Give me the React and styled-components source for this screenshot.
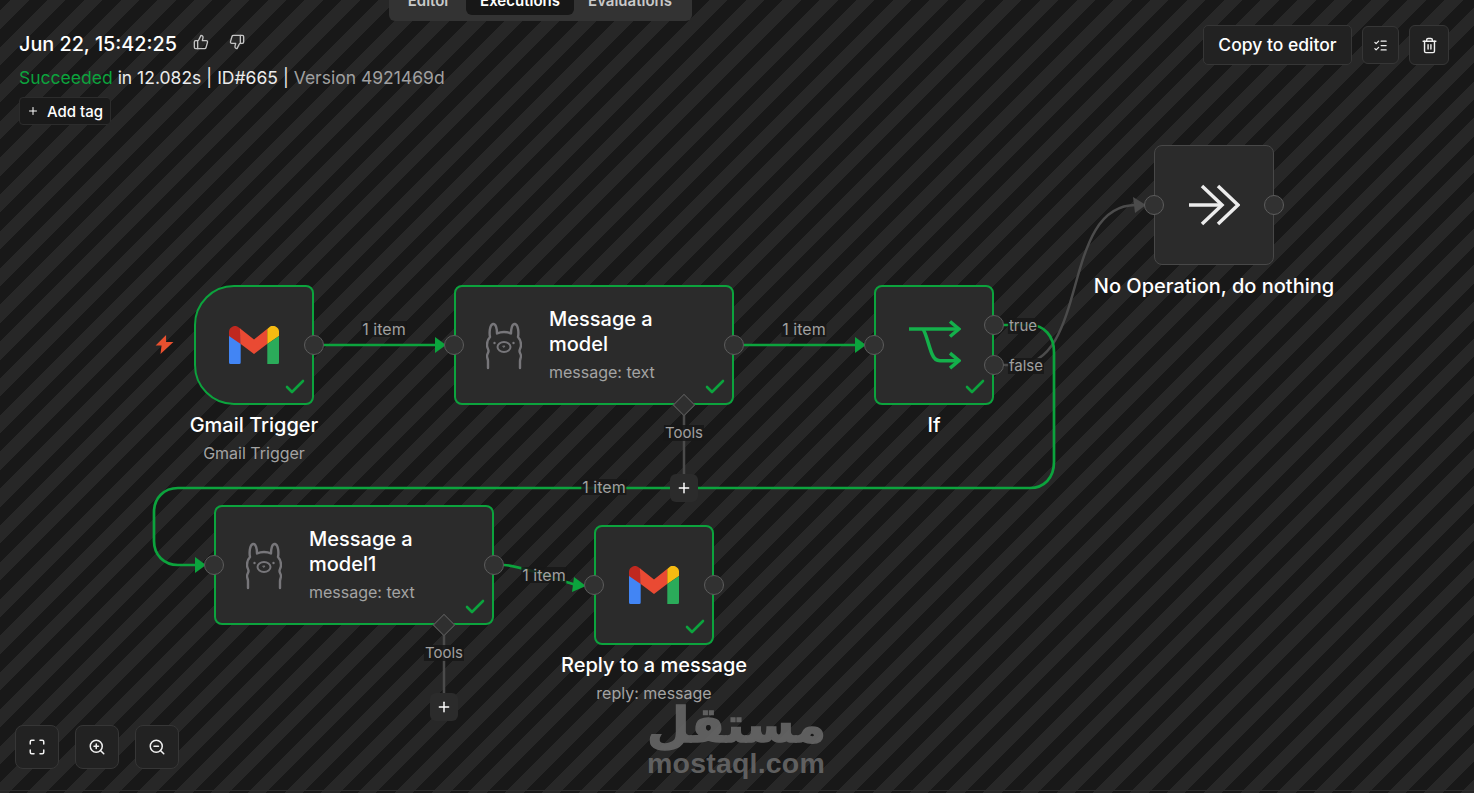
import React from "react";
import styled, { createGlobalStyle } from "styled-components";
import { Check, ListChecks, Maximize, Plus, ThumbsDown, ThumbsUp, Trash2, ZoomIn, ZoomOut } from "lucide-react";

const GREEN = "#0ca33d";
const EDGE_GREY = "#4b4b4b";

const GlobalStyle = createGlobalStyle`
  html, body {
    margin: 0;
    background: #181818;
    font-family: Inter, "Liberation Sans", sans-serif;
    overflow: hidden;
  }
`;

const Page = styled.div`
  position: relative;
  width: 100%;
  height: 100vh;
  overflow: hidden;
  display: flex;
  flex-direction: column;
  justify-content: space-between;
  box-sizing: border-box;
  background: repeating-linear-gradient(
    135deg,
    #181818 0 7.6px,
    #272727 7.6px 20.6px,
    #181818 20.6px 26px
  );
  &::after {
    content: "";
    position: absolute;
    left: 0;
    right: 0;
    bottom: 2px;
    height: 1px;
    background: #2e2e2e;
  }
`;

const Canvas = styled.div`
  position: absolute;
  inset: 0;
`;

const EdgeLayer = styled.svg`
  position: absolute;
  inset: 0;
`;

const Tabs = styled.div`
  position: absolute;
  top: -14px;
  left: 389px;
  width: 303px;
  height: 35px;
  box-sizing: border-box;
  padding-left: 3px;
  display: flex;
  background: #333;
  border-radius: 6px;
`;

const Tab = styled.div`
  width: ${(p) => p.$w}px;
  height: 29px;
  flex: none;
  display: flex;
  align-items: center;
  justify-content: center;
  font-size: 15px;
  font-weight: 600;
  color: ${(p) => (p.$active ? "#fff" : "#c9c9c9")};
  background: ${(p) => (p.$active ? "#171717" : "transparent")};
  border-radius: 6px;
`;

const Header = styled.header`
  position: relative;
  display: flex;
  justify-content: space-between;
  align-items: flex-start;
  padding: 25px 25px 0 19px;
`;

const Info = styled.div`
  display: flex;
  flex-direction: column;
`;

const TitleRow = styled.div`
  display: flex;
  align-items: center;
  height: 36px;
`;

const Title = styled.span`
  font-size: 19.800px;
  font-weight: 500;
  color: #fff;
  margin-right: 16px;
  margin-top: 2px;
`;

const Thumb = styled.span`
  display: flex;
  color: #c4c4c4;
  margin-right: 20px;
  margin-top: -3px;
`;

const Status = styled.div`
  margin-top: 2px;
  height: 28px;
  display: flex;
  align-items: center;
  gap: 5px;
  font-size: 17.500px;
  color: #ececec;
  white-space: pre;
`;

const Success = styled.span`
  color: ${GREEN};
`;

const Muted = styled.span`
  color: #a0a0a0;
`;

const AddTag = styled.button`
  margin-top: 6px;
  width: 92px;
  height: 28px;
  padding: 0;
  display: flex;
  align-items: center;
  justify-content: center;
  gap: 8px;
  font: 500 15px Inter, sans-serif;
  color: #fff;
  background: #1a1a1a;
  border: 1px solid #2c2c2c;
  border-radius: 4px;
`;

const Actions = styled.div`
  display: flex;
  align-items: center;
  gap: 10px;
`;

const CopyButton = styled.button`
  width: 149px;
  height: 40px;
  padding: 0 0 2px;
  font: 500 17.500px Inter, sans-serif;
  color: #fff;
  background: #222;
  border: 1px solid #363636;
  border-radius: 5px;
`;

const SquareButton = styled.button`
  width: ${(p) => p.$w}px;
  height: ${(p) => p.$h}px;
  padding: 0;
  display: flex;
  align-items: center;
  justify-content: center;
  color: #f0f0f0;
  background: #222;
  border: 1px solid #363636;
  border-radius: ${(p) => p.$r || 6}px;
`;

const Footer = styled.footer`
  position: relative;
  display: flex;
  gap: 16px;
  padding: 0 0 24px 15px;
`;

const Node = styled.div`
  position: absolute;
  left: ${(p) => p.$x}px;
  top: ${(p) => p.$y}px;
  width: ${(p) => p.$w}px;
  height: 120px;
  box-sizing: border-box;
  display: flex;
  align-items: center;
  justify-content: ${(p) => (p.$wide ? "flex-start" : "center")};
  padding-left: ${(p) => (p.$wide ? 30 : 0)}px;
  background: #2b2b2b;
  border: ${(p) => (p.$idle ? "1px solid #484848" : `2px solid ${GREEN}`)};
  border-radius: ${(p) => (p.$trigger ? "40px 8px 8px 40px" : "8px")};
`;

const NodeText = styled.div`
  margin: -2px 0 0 27px;
  width: 150px;
`;

const NodeName = styled.div`
  font-size: 20px;
  font-weight: 500;
  line-height: 25px;
  color: #fff;
`;

const NodeSub = styled.div`
  margin-top: 5px;
  font-size: 16px;
  line-height: 20px;
  color: #a3a3a3;
`;

const Caption = styled.div`
  position: absolute;
  top: 100%;
  left: 50%;
  transform: translateX(-50%);
  margin-top: 10px;
  width: max-content;
  text-align: center;
`;

const CaptionSub = styled.div`
  margin-top: 5px;
  font-size: 16px;
  line-height: 20px;
  color: #a3a3a3;
`;

const Handle = styled.span`
  position: absolute;
  top: ${(p) => p.$top}px;
  ${(p) => p.$side}: ${(p) => (p.$thin ? -11 : -12)}px;
  width: 20px;
  height: 20px;
  box-sizing: border-box;
  background: #313131;
  border: 1px solid #5c5c5c;
  border-radius: 50%;
`;

const DoneMark = styled.span`
  position: absolute;
  right: 5px;
  bottom: 4px;
  display: flex;
  color: ${GREEN};
`;

const EdgeLabel = styled.span`
  position: absolute;
  left: ${(p) => p.$x}px;
  top: ${(p) => p.$y}px;
  transform: translate(-50%, -50%);
  padding: 0 1px;
  font-size: ${(p) => p.$size || 16}px;
  line-height: 16px;
  color: #a0a0a0;
  background: rgba(23, 23, 23, 0.85);
`;

const Diamond = styled.span`
  position: absolute;
  left: ${(p) => p.$x - 8}px;
  top: ${(p) => p.$y - 8}px;
  width: 16px;
  height: 16px;
  box-sizing: border-box;
  background: #2f2f2f;
  border: 1px solid #5a5a5a;
  transform: rotate(45deg);
`;

const AddNode = styled.span`
  position: absolute;
  left: ${(p) => p.$x - 14}px;
  top: ${(p) => p.$y - 14}px;
  width: 28px;
  height: 28px;
  display: flex;
  align-items: center;
  justify-content: center;
  color: #fff;
  background: #2b2b2b;
  border-radius: 6px;
`;

const Bolt = styled.svg`
  position: absolute;
  left: 154px;
  top: 334px;
`;

const Watermark = styled.div`
  position: absolute;
  left: 647px;
  top: 698px;
  width: 178px;
  text-align: center;
  color: #656565;
  opacity: 0.92;
`;

const WatermarkArabic = styled.div`
  font-family: "DejaVu Sans", sans-serif;
  font-weight: 700;
  font-size: 49px;
  line-height: 55px;
  -webkit-text-stroke: 1.500px #656565;
`;

const WatermarkLatin = styled.div`
  font-family: "Liberation Sans", sans-serif;
  font-weight: 700;
  font-size: 28.500px;
  line-height: 20px;
  letter-spacing: 0.2px;
`;

const LlamaSvg = styled.svg`
  flex: none;
  margin-top: 2px;
`;

const GmailLogo = () => (
  <svg width="50" height="38" viewBox="0 0 50 38">
    <path d="M0 10h11.7v26.5a1.5 1.5 0 0 1-1.5 1.5H1.5A1.5 1.5 0 0 1 0 36.5z" fill="#4285f4" />
    <path d="M0 10V6.2A6 6 0 0 1 9.8 1.4L11.7 3v15z" fill="#c0281f" />
    <path d="M10.8 2.2 25 13.6 38.4 2.8v15L25 28 11.7 18z" fill="#ea4a33" />
    <path d="M38.3 18V3L40 1.4A6 6 0 0 1 50 6.2V10z" fill="#f6bb12" />
    <path d="M38.3 18 50 10v26.5a1.5 1.5 0 0 1-1.5 1.5h-10.2z" fill="#2bab5a" />
  </svg>
);

const LlamaIcon = () => (
  <LlamaSvg width="36" height="48" viewBox="0 0 36 48" fill="none" stroke="#77767a" strokeWidth="2.400" strokeLinecap="round" strokeLinejoin="round">
    <path d="M2 46V39C2 37 1 36 1 34C1 32 2.500 31 2.500 29C2.500 27 1 26 1 23C1 19 2.500 16.500 4 15C3.200 11 3.500 3 7 2C10 1.500 11 7 11 11.500C13 10.500 15 10 18 10C21 10 23 10.500 25 11.500C25 7 26 1.500 29 2C32.500 3 32.800 11 32 15C33.500 16.500 35 19 35 23C35 26 33.500 27 33.500 29C33.500 31 35 32 35 34C35 36 34 37 34 39V46" />
    <ellipse cx="18" cy="25" rx="6.500" ry="5" strokeWidth="2" />
    <path d="M17 24h2L18 25.300z" fill="#77767a" strokeWidth="0.800" />
    <circle cx="8.500" cy="21" r="1.200" fill="#77767a" stroke="none" />
    <circle cx="27.500" cy="21" r="1.200" fill="#77767a" stroke="none" />
  </LlamaSvg>
);

const IfIcon = () => (
  <svg width="54" height="50" viewBox="0 0 54 50" fill="none" stroke="#14b04b" strokeWidth="3.500">
    <path d="M2 9H52" />
    <path d="M43 1.500L52 9L43 16.500" />
    <path d="M16 9C19 13 22 27 25 34C27 39 29 40.700 33 40.700H52" />
    <path d="M43 33.200L52 40.700L43 48.200" />
  </svg>
);

const NoOpIcon = () => (
  <svg width="52" height="42" viewBox="0 0 52 42" fill="none" stroke="#ececec" strokeWidth="3.500">
    <path d="M1 21H33" />
    <path d="M14 2L34 21L14 40" />
    <path d="M30 2L50 21L30 40" />
  </svg>
);

const Done = () => (
  <DoneMark>
    <Check size={24} strokeWidth={2.6} />
  </DoneMark>
);

const edges = [
  { d: "M324 345H436", tip: "435,337 435,353 446,345" },
  { d: "M744 345H856", tip: "855,337 855,353 866,345" },
  {
    d: "M1004 325H1030C1044 325 1054 336 1054 352V462C1054 478 1044 488 1030 488H178C164 488 154 498 154 512V541C154 555 164 565 178 565H196",
    tip: "195,557 195,573 206,565",
  },
  { d: "M504 565C522 566 556 579 576 585", tip: "574,577 572,592 586,586" },
];

const greyEdges = [
  { d: "M1004 365H1016C1090 365 1060 205 1136 205", tip: "1133,197 1135,213 1146,205" },
  { d: "M684 415V478" },
  { d: "M444 635V698" },
];

const App = () => (
  <Page>
    <GlobalStyle />
    <Canvas>
      <EdgeLayer width="1474" height="793" fill="none">
        {greyEdges.map((edge) => (
          <g key={edge.d}>
            <path d={edge.d} stroke={EDGE_GREY} strokeWidth="2.500" />
            {edge.tip && <polygon points={edge.tip} fill={EDGE_GREY} />}
          </g>
        ))}
        {edges.map((edge) => (
          <g key={edge.d}>
            <path d={edge.d} stroke={GREEN} strokeWidth="2.700" />
            <polygon points={edge.tip} fill={GREEN} />
          </g>
        ))}
      </EdgeLayer>

      <Bolt width="21" height="21" viewBox="0 0 19 20">
        <polygon points="11,1 1,11 6.700,11 5.700,19 18,7.700 11,7.700" fill="#e8502f" />
      </Bolt>

      <Node $x={194} $y={285} $w={120} $trigger>
        <GmailLogo />
        <Handle $side="right" $top={48} />
        <Done />
        <Caption>
          <NodeName>Gmail Trigger</NodeName>
          <CaptionSub>Gmail Trigger</CaptionSub>
        </Caption>
      </Node>

      <Node $x={454} $y={285} $w={280} $wide>
        <LlamaIcon />
        <NodeText>
          <NodeName>Message a model</NodeName>
          <NodeSub>message: text</NodeSub>
        </NodeText>
        <Handle $side="left" $top={48} />
        <Handle $side="right" $top={48} />
        <Done />
      </Node>

      <Node $x={874} $y={285} $w={120}>
        <IfIcon />
        <Handle $side="left" $top={48} />
        <Handle $side="right" $top={28} />
        <Handle $side="right" $top={68} />
        <Done />
        <Caption>
          <NodeName>If</NodeName>
        </Caption>
      </Node>

      <Node $x={1154} $y={145} $w={120} $idle>
        <NoOpIcon />
        <Handle $side="left" $top={49} $thin />
        <Handle $side="right" $top={49} $thin />
        <Caption>
          <NodeName>No Operation, do nothing</NodeName>
        </Caption>
      </Node>

      <Node $x={214} $y={505} $w={280} $wide>
        <LlamaIcon />
        <NodeText>
          <NodeName>Message a model1</NodeName>
          <NodeSub>message: text</NodeSub>
        </NodeText>
        <Handle $side="left" $top={48} />
        <Handle $side="right" $top={48} />
        <Done />
      </Node>

      <Node $x={594} $y={525} $w={120}>
        <GmailLogo />
        <Handle $side="left" $top={48} />
        <Handle $side="right" $top={48} />
        <Done />
        <Caption>
          <NodeName>Reply to a message</NodeName>
          <CaptionSub>reply: message</CaptionSub>
        </Caption>
      </Node>

      <EdgeLabel $x={384} $y={329}>1 item</EdgeLabel>
      <EdgeLabel $x={804} $y={329}>1 item</EdgeLabel>
      <EdgeLabel $x={604} $y={487}>1 item</EdgeLabel>
      <EdgeLabel $x={544} $y={575}>1 item</EdgeLabel>
      <EdgeLabel $x={1023} $y={326} $size={15}>true</EdgeLabel>
      <EdgeLabel $x={1026} $y={366} $size={15}>false</EdgeLabel>
      <EdgeLabel $x={684} $y={433} $size={15}>Tools</EdgeLabel>
      <EdgeLabel $x={444} $y={653} $size={15}>Tools</EdgeLabel>

      <Diamond $x={684} $y={405} />
      <Diamond $x={444} $y={625} />
      <AddNode $x={684} $y={488}><Plus size={16} strokeWidth={2.2} /></AddNode>
      <AddNode $x={444} $y={707}><Plus size={16} strokeWidth={2.2} /></AddNode>

      <Watermark>
        <WatermarkArabic>مستقل</WatermarkArabic>
        <WatermarkLatin>mostaql.com</WatermarkLatin>
      </Watermark>
    </Canvas>

    <Tabs>
      <Tab $w={74}>Editor</Tab>
      <Tab $w={108} $active>Executions</Tab>
      <Tab $w={112}>Evaluations</Tab>
    </Tabs>

    <Header>
      <Info>
        <TitleRow>
          <Title>Jun 22, 15:42:25</Title>
          <Thumb><ThumbsUp size={16} /></Thumb>
          <Thumb><ThumbsDown size={16} /></Thumb>
        </TitleRow>
        <Status>
          <Success>Succeeded</Success>
          <span>in 12.082s</span>
          <span>|</span>
          <span>ID#665</span>
          <span>|</span>
          <Muted>Version 4921469d</Muted>
        </Status>
        <AddTag>
          <Plus size={12} />
          Add tag
        </AddTag>
      </Info>
      <Actions>
        <CopyButton>Copy to editor</CopyButton>
        <SquareButton $w={37} $h={38}><ListChecks size={15} /></SquareButton>
        <SquareButton $w={40} $h={40}><Trash2 size={17} /></SquareButton>
      </Actions>
    </Header>

    <Footer>
      <SquareButton $w={44} $h={44} $r={8}><Maximize size={18} strokeWidth={2} /></SquareButton>
      <SquareButton $w={44} $h={44} $r={8}><ZoomIn size={18} strokeWidth={2} /></SquareButton>
      <SquareButton $w={44} $h={44} $r={8}><ZoomOut size={18} strokeWidth={2} /></SquareButton>
    </Footer>
  </Page>
);

export default App;
